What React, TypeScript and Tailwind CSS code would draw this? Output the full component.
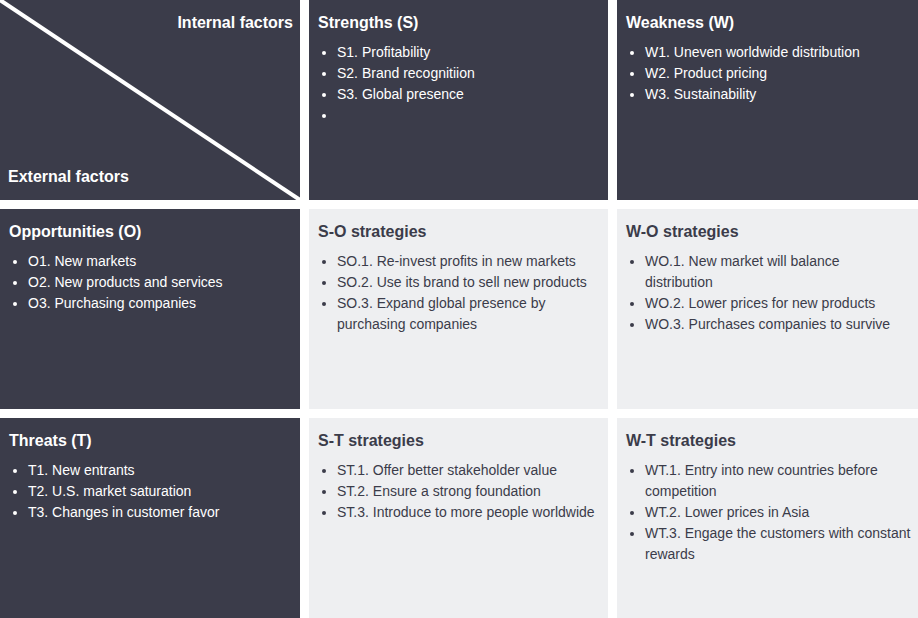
import React from "react";

type Cell = {
  title: string;
  items: string[];
  dark?: boolean;
  // items that need a tighter line box to wrap like the original
  tight?: number[];
};

const cells: Cell[] = [
  {
    title: "Strengths (S)",
    items: ["S1. Profitability", "S2. Brand recognitiion", "S3. Global presence", ""],
    dark: true,
  },
  {
    title: "Weakness (W)",
    items: ["W1. Uneven worldwide distribution", "W2. Product pricing", "W3. Sustainability"],
    dark: true,
  },
  {
    title: "Opportunities (O)",
    items: ["O1. New markets", "O2. New products and services", "O3. Purchasing companies"],
    dark: true,
  },
  {
    title: "S-O strategies",
    items: [
      "SO.1. Re-invest profits in new markets",
      "SO.2. Use its brand to sell new products",
      "SO.3. Expand global presence by purchasing companies",
    ],
  },
  {
    title: "W-O strategies",
    items: [
      "WO.1. New market will balance distribution",
      "WO.2. Lower prices for new products",
      "WO.3. Purchases companies to survive",
    ],
    tight: [0],
  },
  {
    title: "Threats (T)",
    items: ["T1. New entrants", "T2. U.S. market saturation", "T3. Changes in customer favor"],
    dark: true,
  },
  {
    title: "S-T strategies",
    items: [
      "ST.1. Offer better stakeholder value",
      "ST.2. Ensure a strong foundation",
      "ST.3. Introduce to more people worldwide",
    ],
  },
  {
    title: "W-T strategies",
    items: [
      "WT.1. Entry into new countries before competition",
      "WT.2. Lower prices in Asia",
      "WT.3. Engage the customers with constant rewards",
    ],
  },
];

const Box: React.FC<{ cell: Cell }> = ({ cell }) => (
  <div
    className={
      cell.dark
        ? "h-[200px] bg-[#3b3c4a] pb-[9px] pl-[9px] pr-[5px] pt-[10px] text-white"
        : "h-[200px] bg-[#eeeff1] pb-[9px] pl-[9px] pr-[5px] pt-[10px] text-[#3b3c4a]"
    }
  >
    <h2 className="text-[16px] font-bold leading-[26px]">{cell.title}</h2>
    <ul className="mt-[6px] list-disc pl-[19px] text-[14px] leading-[21px]">
      {cell.items.map((it, i) => (
        <li key={i} className={cell.tight?.includes(i) ? "min-h-[21px] pr-[20px]" : "min-h-[21px]"}>
          {it}
        </li>
      ))}
    </ul>
  </div>
);

export default function App() {
  return (
    <div
      className="grid w-[918px] grid-cols-[300px_299px_301px] gap-[9px] bg-white"
      style={{ fontFamily: '"Liberation Sans", Arial, sans-serif' }}
    >
      {/* corner cell with the diagonal split */}
      <div className="relative h-[200px] bg-[#3b3c4a] text-white">
        <svg className="absolute inset-0" width="300" height="200" viewBox="0 0 300 200">
          <line x1="0" y1="0" x2="300" y2="200" stroke="white" strokeWidth="4" />
        </svg>
        <div className="relative flex h-full flex-col justify-between pb-[10px] pl-[8px] pr-[7px] pt-[10px]">
          <div className="text-right text-[16px] font-bold leading-[26px]">Internal factors</div>
          <div className="text-[16px] font-bold leading-[26px]">External factors</div>
        </div>
      </div>
      {cells.map((c) => (
        <Box key={c.title} cell={c} />
      ))}
    </div>
  );
}
